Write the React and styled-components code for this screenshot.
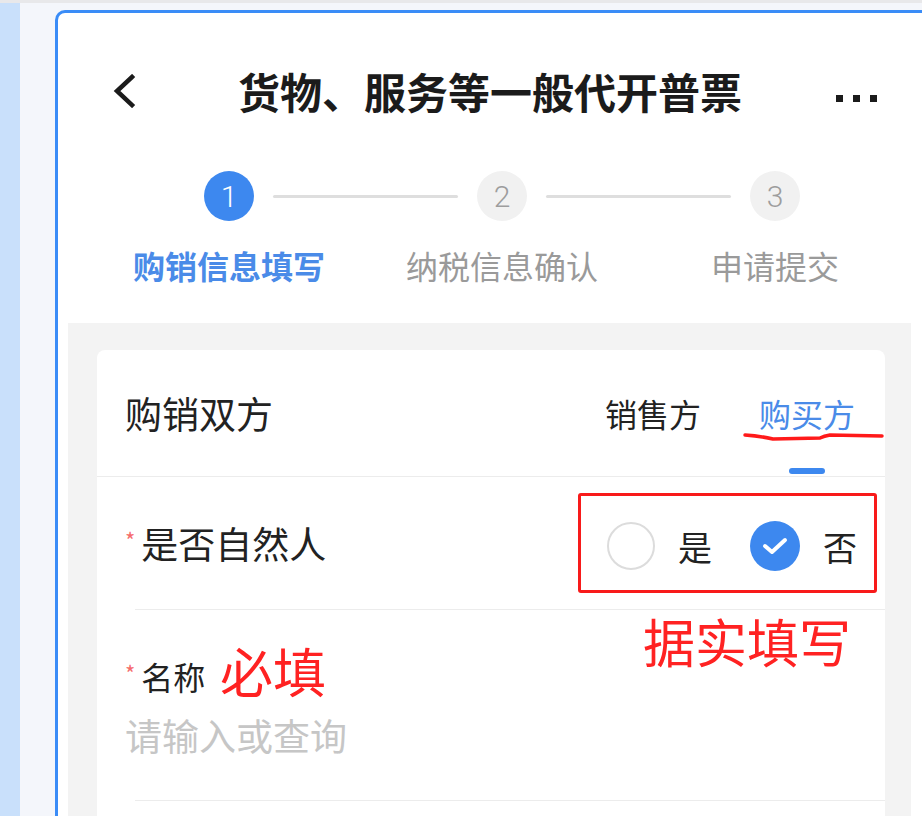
import React from "react";
import styled, { createGlobalStyle } from "styled-components";

const Global = createGlobalStyle`
  html, body { margin: 0; padding: 0; overflow: hidden; background: #f4f6fb; }
  * { box-sizing: border-box; }
  body { font-family: "Noto Sans CJK SC", "Noto Sans", sans-serif; color: #222; }
`;

const Page = styled.div`
  display: flex;
  flex-direction: column;
  width: 922px;
  height: 816px;
  overflow: hidden;
`;
const TopStrip = styled.div`
  height: 3px;
  background: #e8e8ea;
  flex-shrink: 0;
`;
const Body = styled.div`
  flex: 1;
  display: flex;
  min-height: 0;
`;
const LeftStrip = styled.div`
  width: 20px;
  background: #c9e0fb;
  flex-shrink: 0;
`;
const Gutter = styled.div`
  width: 35px;
  background: #f4f6fb;
  flex-shrink: 0;
`;
const FrameArea = styled.div`
  flex: 1;
  display: flex;
  padding-top: 7px;
  background: #f4f6fb;
  min-width: 0;
`;
const Panel = styled.div`
  flex: 1;
  display: flex;
  flex-direction: column;
  background: #fff;
  border-top: 3px solid #3a8cf7;
  border-left: 3px solid #3a8cf7;
  border-top-left-radius: 10px;
  min-width: 0;
`;
const Header = styled.div`
  display: grid;
  grid-template-columns: 1fr auto 1fr;
  align-items: center;
  height: 80px;
  margin-top: 38px;
  padding: 0 45px;
`;
const Back = styled.svg`
  justify-self: start;
  margin-left: 10px;
`;
const Title = styled.h1`
  margin: 0;
  font-size: 42px;
  font-weight: 700;
  color: #1b1b1b;
  line-height: 50px;
  white-space: nowrap;
`;
const More = styled.div`
  justify-self: end;
  display: flex;
  gap: 10px;
  margin-top: 14px;
`;
const Dot = styled.span`
  width: 7px;
  height: 7px;
  background: #1b1b1b;
`;
const Steps = styled.div`
  display: grid;
  grid-template-columns: 50px 1fr 50px 1fr 50px;
  row-gap: 24px;
  align-items: center;
  margin-top: 40px;
  padding: 0 122px 0 146px;
`;
const Circle = styled.div`
  width: 50px;
  height: 50px;
  border-radius: 50%;
  display: flex;
  align-items: center;
  justify-content: center;
  font-family: Roboto, "Noto Sans", sans-serif;
  font-size: 30px;
  font-weight: 300;
  background: ${(p) => (p.$active ? "#3d88ef" : "#f1f1f1")};
  color: ${(p) => (p.$active ? "#fff" : "#9d9d9d")};
`;
const Connector = styled.div`
  height: 3px;
  margin: 0 19px;
  background: #dedede;
  border-radius: 2px;
`;
const StepLabel = styled.div`
  grid-row: 2;
  grid-column: ${(p) => p.$col};
  margin: 0 -90px;
  text-align: center;
  font-size: 32px;
  line-height: 40px;
  white-space: nowrap;
  font-weight: ${(p) => (p.$active ? 700 : 400)};
  color: ${(p) => (p.$active ? "#4a8be8" : "#9a9a9a")};
`;
const Content = styled.div`
  flex: 1;
  margin: 38px 11px 0 10px;
  padding: 27px 26px 0 29px;
  background: #f3f3f3;
  display: flex;
  flex-direction: column;
`;
const Card = styled.div`
  flex: 1;
  position: relative;
  background: #fff;
  border-radius: 8px 8px 0 0;
`;
const CardHeader = styled.div`
  height: 127px;
  display: flex;
  align-items: stretch;
  justify-content: space-between;
  padding: 0 30px 0 28px;
  border-bottom: 1px solid #ececec;
`;
const CardTitle = styled.div`
  display: flex;
  align-items: center;
  font-size: 37px;
  color: #222;
`;
const Tabs = styled.div`
  display: flex;
  gap: 58px;
`;
const Tab = styled.div`
  position: relative;
  display: flex;
  align-items: center;
  font-size: 32px;
  color: ${(p) => (p.$active ? "#4a8be8" : "#222")};
  &::after {
    content: "";
    display: ${(p) => (p.$active ? "block" : "none")};
    position: absolute;
    bottom: 2px;
    left: 50%;
    transform: translateX(-50%);
    width: 36px;
    height: 6px;
    border-radius: 3px;
    background: #3d88ef;
  }
`;
const Row = styled.div`
  display: flex;
  align-items: center;
  justify-content: space-between;
  height: 132px;
  padding: 0 28px;
`;
const StackRow = styled.div`
  display: flex;
  flex-direction: column;
  padding: 46px 28px 45px;
`;
const Label = styled.div`
  display: flex;
  align-items: center;
  font-size: ${(p) => p.$size || 37}px;
  line-height: 40px;
  color: #222;
`;
const Star = styled.span`
  color: #f56c6c;
  font-size: 22px;
  line-height: 22px;
  margin: 0 6px 8px 0;
`;
const Placeholder = styled.div`
  margin-top: 19px;
  font-size: 37px;
  line-height: 40px;
  color: #c6c6c6;
`;
const Divider = styled.div`
  height: 1px;
  margin-left: 38px;
  background: #ececec;
`;
const RadioGroup = styled.div`
  display: flex;
  align-items: center;
  gap: 38px;
  margin-top: 6px;
`;
const Option = styled.div`
  display: flex;
  align-items: center;
  gap: 23px;
  font-size: 34px;
  color: #222;
`;
const RadioEmpty = styled.span`
  width: 48px;
  height: 48px;
  border-radius: 50%;
  border: 2.5px solid #dcdcdc;
`;
const RadioChecked = styled.span`
  width: 50px;
  height: 50px;
  border-radius: 50%;
  background: #3d88ef;
  display: flex;
  align-items: center;
  justify-content: center;
`;
const RedBox = styled.div`
  position: absolute;
  left: 481px;
  top: 143px;
  width: 299px;
  height: 100px;
  border: 3px solid #f81a1a;
  border-radius: 3px;
  pointer-events: none;
`;
const Note = styled.div`
  position: absolute;
  left: ${(p) => p.$x}px;
  top: ${(p) => p.$y}px;
  font-size: ${(p) => p.$size}px;
  line-height: ${(p) => p.$size}px;
  font-weight: 400;
  color: #ff2222;
  white-space: nowrap;
`;
const Scribble = styled.svg`
  position: absolute;
  left: 0;
  top: 0;
  overflow: visible;
  pointer-events: none;
`;

export default function App() {
  return (
    <Page>
      <Global />
      <TopStrip />
      <Body>
        <LeftStrip />
        <Gutter />
        <FrameArea>
          <Panel>
            <Header>
              <Back width="24" height="34" viewBox="0 0 24 34">
                <polyline
                  points="19,3 4,17 19,31"
                  fill="none"
                  stroke="#1b1b1b"
                  strokeWidth="4.5"
                  strokeLinecap="square"
                />
              </Back>
              <Title>货物、服务等一般代开普票</Title>
              <More>
                <Dot />
                <Dot />
                <Dot />
              </More>
            </Header>
            <Steps>
              <Circle $active>1</Circle>
              <Connector />
              <Circle>2</Circle>
              <Connector />
              <Circle>3</Circle>
              <StepLabel $col={1} $active>购销信息填写</StepLabel>
              <StepLabel $col={3}>纳税信息确认</StepLabel>
              <StepLabel $col={5}>申请提交</StepLabel>
            </Steps>
            <Content>
              <Card>
                <CardHeader>
                  <CardTitle>购销双方</CardTitle>
                  <Tabs>
                    <Tab>销售方</Tab>
                    <Tab $active>购买方</Tab>
                  </Tabs>
                </CardHeader>
                <Row>
                  <Label>
                    <Star>*</Star>是否自然人
                  </Label>
                  <RadioGroup>
                    <Option>
                      <RadioEmpty />是
                    </Option>
                    <Option>
                      <RadioChecked>
                        <svg width="26" height="20" viewBox="0 0 26 20">
                          <polyline
                            points="3,10 10,16 23,4"
                            fill="none"
                            stroke="#fff"
                            strokeWidth="4"
                            strokeLinecap="round"
                            strokeLinejoin="round"
                          />
                        </svg>
                      </RadioChecked>
                      否
                    </Option>
                  </RadioGroup>
                </Row>
                <Divider />
                <StackRow>
                  <Label $size={32}>
                    <Star>*</Star>名称
                  </Label>
                  <Placeholder>请输入或查询</Placeholder>
                </StackRow>
                <Divider />
                <RedBox />
                <Note $x={546} $y={265} $size={52}>据实填写</Note>
                <Note $x={123} $y={294} $size={53}>必填</Note>
                <Scribble width="800" height="100">
                  <path
                    d="M648 85 Q663 86 676 89 L723 88 Q727 86 733 85 L785 86"
                    fill="none"
                    stroke="#ff1a1a"
                    strokeWidth="3.5"
                    strokeLinecap="round"
                  />
                </Scribble>
              </Card>
            </Content>
          </Panel>
        </FrameArea>
      </Body>
    </Page>
  );
}
